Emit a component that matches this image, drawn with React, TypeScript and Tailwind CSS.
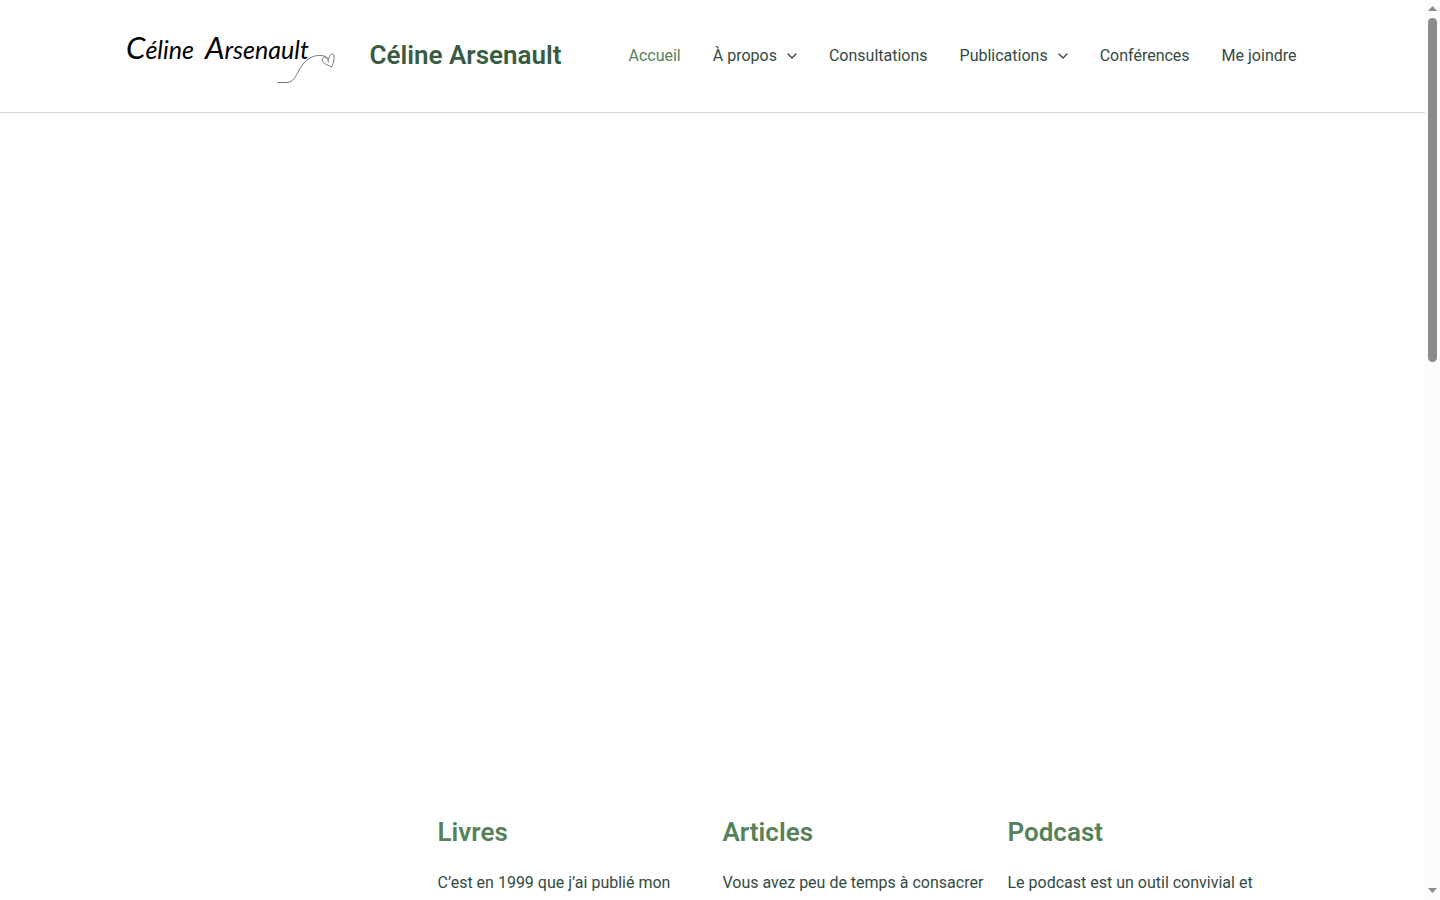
type NavItem = {
  label: string;
  active?: boolean;
  hasMenu?: boolean;
};

const navItems: NavItem[] = [
  { label: "Accueil", active: true },
  { label: "À propos", hasMenu: true },
  { label: "Consultations" },
  { label: "Publications", hasMenu: true },
  { label: "Conférences" },
  { label: "Me joindre" },
];

const columns = [
  { title: "Livres", text: "C’est en 1999 que j’ai publié mon" },
  { title: "Articles", text: "Vous avez peu de temps à consacrer" },
  { title: "Podcast", text: "Le podcast est un outil convivial et" },
];

function Signature() {
  return (
    <svg viewBox="0 0 242 80" className="h-20 w-[242px]" role="img" aria-label="Signature">
      <g fill="#000" fontFamily="Lato, sans-serif" fontStyle="italic" fontSize="25">
        <text x="13" y="43">
          <tspan fontSize="31">C</tspan>éline
        </text>
        <text x="92" y="43">
          <tspan fontSize="31">A</tspan>rsenault
        </text>
      </g>
      <g fill="none" stroke="#666" strokeWidth="0.9" strokeLinecap="round" strokeLinejoin="round">
        <path d="M165 66.500H174C180 66.500 183 60 186 54C190 47 195 42 202 40C206 39 212 39 215 42.500" />
        <path d="M215.500 46C215 42 212 40.500 210 42C207.500 44 211 48 218.500 51C220.500 47 222 41 220.500 38.500C218.500 37 216 40 215.500 43.500" />
      </g>
    </svg>
  );
}

function Chevron() {
  return (
    <svg viewBox="0 0 10 6" className="h-1.5 w-2.5" fill="none" aria-hidden="true">
      <path
        d="M1 1L5 5L9 1"
        stroke="currentColor"
        strokeWidth="1.4"
        strokeLinecap="round"
        strokeLinejoin="round"
      />
    </svg>
  );
}

function Header() {
  return (
    <header className="border-b border-[#d6d6d6] bg-white">
      <div className="mx-auto flex h-28 max-w-[1200px] items-center justify-between">
        <a href="#" className="flex items-center gap-[15px]">
          <Signature />
          <span className="pb-0.5 text-[26px] leading-8 font-semibold whitespace-nowrap text-[#385c42]">
            Céline Arsenault
          </span>
        </a>
        <nav aria-label="Menu principal">
          <ul className="flex items-center">
            {navItems.map((item) => (
              <li key={item.label}>
                <a
                  href="#"
                  className={`flex items-center gap-2.5 px-4 leading-6 whitespace-nowrap ${
                    item.active ? "text-[#56825a]" : "text-[#334a42]"
                  }`}
                >
                  {item.label}
                  {item.hasMenu && <Chevron />}
                </a>
              </li>
            ))}
          </ul>
        </nav>
      </div>
    </header>
  );
}

function Scrollbar() {
  return (
    <div className="flex w-[15px] shrink-0 flex-col items-center bg-[#fcfcfc]" aria-hidden="true">
      <svg viewBox="0 0 15 18" className="h-[18px] w-full" fill="#8b8b8b">
        <path d="M3 11L7.500 6L12 11Z" />
      </svg>
      <div className="w-full flex-1 px-[3px]">
        <div className="h-[344px] rounded-full bg-[#8b8b8b]" />
      </div>
      <svg viewBox="0 0 15 18" className="h-[18px] w-full" fill="#8b8b8b">
        <path d="M3 6L12 6L7.500 11Z" />
      </svg>
    </div>
  );
}

export default function App() {
  return (
    <div className="flex h-screen overflow-hidden bg-white font-[Roboto,sans-serif] text-base text-[#334a42]">
      <div className="min-w-0 flex-1 overflow-hidden">
        <Header />
        <main>
          <section className="h-[692px]" />
          <section className="mx-auto grid max-w-[1140px] grid-cols-4">
            <div className="p-2.5" />
            {columns.map((col) => (
              <article key={col.title} className="p-2.5">
                <h2 className="mb-5 text-[26px] leading-[34px] font-semibold text-[#56825a]">
                  {col.title}
                </h2>
                <p className="leading-7">{col.text}</p>
              </article>
            ))}
          </section>
        </main>
      </div>
      <Scrollbar />
    </div>
  );
}
